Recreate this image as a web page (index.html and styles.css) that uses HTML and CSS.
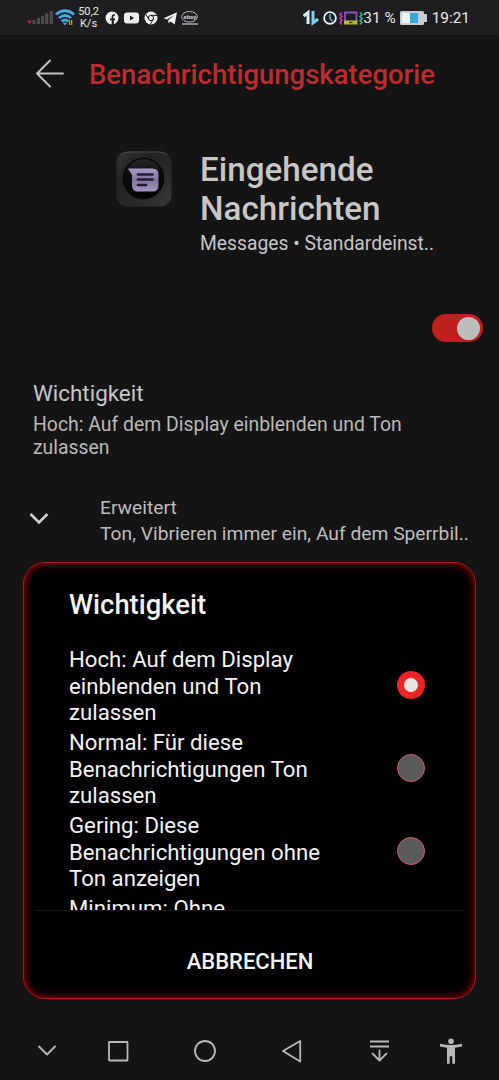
FILE: index.html
```
<!DOCTYPE html>
<html lang="de">
<head>
    <meta charset="UTF-8">
    <meta name="viewport" content="width=device-width, initial-scale=1.0">
    <title>Benachrichtigungskategorie</title>
    <link rel="stylesheet" href="styles.css">
</head>
<body>
    <div class="screen">
        <div class="status-bar">
            <div class="status-left">
                <svg width="27" height="15" viewBox="0 0 27 15">
                    <path d="M0 10.500h5L2.500 14z" fill="#c21f28"/>
                    <path d="M5.500 10h3v4h-3zM10 8h3v6h-3zM14 6h3v8h-3zM18 3.500h3.200V14H18zM22.500 1h3.500v13h-3.500z" fill="#4b4b4c"/>
                </svg>
                <svg class="wifi" width="20" height="18" viewBox="0 0 20 18">
                    <g fill="none" stroke="#45a9e2" stroke-width="2.800">
                        <path d="M1 5.500q9-7.500 18 0"/>
                        <path d="M4 9q6-5 12 0"/>
                        <path d="M6.800 12.300q3.200-2.600 6.400 0"/>
                    </g>
                    <path d="M7.800 13.800h4.400L10 16.500z" fill="#45a9e2"/>
                    <path d="M14.500 11v5M16.700 11v5" stroke="#c9a326" stroke-width="1.300"/>
                </svg>
                <div class="speed"><span>50,2</span><span>K/s</span></div>
                <svg class="apps" width="94" height="16" viewBox="0 0 94 16">
                    <circle cx="7" cy="8" r="6.500" fill="#eee"/>
                    <path d="M8 15V8.700M5 9.300h5M10 5H9q-1.500 0-1.500 1.700V15" fill="none" stroke="#1e1e20" stroke-width="1.700"/>
                    <rect x="19" y="2.500" width="15" height="11" rx="3" fill="#eee"/>
                    <path d="M25 5.500v5l4-2.500z" fill="#1e1e20"/>
                    <circle cx="46" cy="8" r="6.500" fill="#eee"/>
                    <circle cx="46" cy="8" r="2.600" fill="none" stroke="#1e1e20" stroke-width="1"/>
                    <path d="M46 5.400h6M43.700 9.200L41 4.600M48.300 9.200L45.300 14.300" stroke="#1e1e20" stroke-width="1"/>
                    <path d="M58.500 8.200L72 2.300 69.700 14.500 65.500 11.500 63.600 13.300 63.200 10.300 69 5 61.900 9.600z" fill="#eee"/>
                    <ellipse cx="84.500" cy="6.800" rx="7.800" ry="5.300" fill="none" stroke="#bbb" stroke-width="1"/>
                    <text class="ebay" x="78.500" y="9">ebay</text>
                    <path d="M77 14h16" stroke="#aaa" stroke-width="1.500"/>
                </svg>
            </div>
            <div class="status-right">
                <svg width="60" height="18" viewBox="0 0 60 18">
                    <g fill="none" stroke-width="3">
                        <path d="M.500 7L5 3.500V15" stroke="#d9edf3"/>
                        <path d="M10 2v12l5-4" stroke="#7fd0ef"/>
                    </g>
                    <circle cx="27" cy="9" r="5.900" fill="none" stroke="#e6f4f5" stroke-width="1.800"/>
                    <path d="M27 5v4.500l2.500 2.500" fill="none" stroke="#59bdcf" stroke-width="1.500"/>
                    <path d="M39 3.500l-2 2 2 2-2 2 2 2-2 2 2 2" fill="none" stroke="#c23aa8" stroke-width="1.600"/>
                    <path d="M57 3.500l2 2-2 2 2 2-2 2 2 2-2 2" fill="none" stroke="#3cae76" stroke-width="1.600"/>
                    <path d="M42 13V3.500h11.500V13" fill="none" stroke="#8952c4" stroke-width="1.800"/>
                    <path d="M41 11.500h13.400v4H41z" fill="#b9bb38"/>
                    <path d="M46 13.500h3.500" stroke="#33351b" stroke-width="1.300"/>
                </svg>
                <span class="percent">31 %</span>
                <svg class="battery" width="27" height="14" viewBox="0 0 27 14">
                    <rect x="0" y="0" width="24" height="14" rx="1.500" fill="#c9cdd0"/>
                    <path d="M24 3h3v8h-3z" fill="#c9cdd0"/>
                    <rect x="2" y="2" width="8" height="10" fill="#e9f5fb"/>
                    <rect x="10" y="2" width="8" height="10" fill="#38a9dd"/>
                </svg>
                <span class="time">19:21</span>
            </div>
        </div>

        <div class="toolbar">
            <svg width="30" height="30" viewBox="0 0 30 30">
                <path d="M15 1.500L2 14.500l13 13M2 14.500h26" fill="none" stroke="#c4c4c4" stroke-width="1.900" stroke-linecap="round" stroke-linejoin="round"/>
            </svg>
            <h1>Benachrichtigungskategorie</h1>
        </div>

        <div class="channel">
            <svg class="app-icon" width="56" height="56" viewBox="0 0 56 56">
                <defs>
                    <linearGradient id="metal" x1="0" y1="0" x2="1" y2="1">
                        <stop offset="0" stop-color="#363636"/>
                        <stop offset=".3" stop-color="#222"/>
                        <stop offset=".6" stop-color="#272726"/>
                        <stop offset="1" stop-color="#383837"/>
                    </linearGradient>
                    <linearGradient id="bubble" x1="0" y1="0" x2="0" y2="1">
                        <stop offset="0" stop-color="#a79bc4"/>
                        <stop offset=".5" stop-color="#81739f"/>
                        <stop offset="1" stop-color="#a194c1"/>
                    </linearGradient>
                    <linearGradient id="lens" x1="0" y1="0" x2="0" y2="1">
                        <stop offset="0" stop-color="#29292b"/>
                        <stop offset=".4" stop-color="#0b0b0c"/>
                        <stop offset="1" stop-color="#040406"/>
                    </linearGradient>
                </defs>
                <rect x=".5" y=".5" width="55" height="55" rx="11" fill="url(#metal)"/>
                <path d="M5 4q4-3 8-3h30q5 0 8 3" fill="none" stroke="#4a4a4a" stroke-width="1"/>
                <circle cx="27.500" cy="27.500" r="20" fill="url(#lens)" stroke="#070707" stroke-width="1.500"/>
                <path d="M12 17.500H36.500q6 0 6 6v11q0 6-6 6H22q-6 0-6-6V24z" fill="url(#bubble)"/>
                <path d="M22 23.500h14.500M22 28.500h14.500M22 34h8" stroke="#211c31" stroke-width="2.700" stroke-linecap="round"/>
            </svg>
            <div class="channel-text">
                <h2>Eingehende Nachrichten</h2>
                <p>Messages • Standardeinst..</p>
            </div>
        </div>

        <div class="switch-row">
            <div class="switch"><div class="knob"></div></div>
        </div>

        <div class="setting">
            <div class="setting-title">Wichtigkeit</div>
            <div class="setting-text">Hoch: Auf dem Display einblenden und Ton zulassen</div>
        </div>

        <div class="advanced">
            <svg width="20" height="14" viewBox="0 0 20 14">
                <path d="M1.500 2l8.500 8.500L18.500 2" fill="none" stroke="#d0d0d0" stroke-width="2.600"/>
            </svg>
            <div class="advanced-text">
                <div>Erweitert</div>
                <div>Ton, Vibrieren immer ein, Auf dem Sperrbil..</div>
            </div>
        </div>

        <div class="nav-bar">
            <svg width="499" height="40" viewBox="0 0 499 40" fill="none" stroke="#b8b8b8" stroke-width="1.800" stroke-linecap="round" stroke-linejoin="round">
                <path d="M39 16.500l8 8 8-8"/>
                <rect x="109" y="12" width="18.500" height="18.500" rx=".5"/>
                <circle cx="205" cy="21" r="10"/>
                <path d="M300.200 11v20.500L283 21z"/>
                <path stroke-linecap="butt" d="M370 11.500h19M370 16.500h19"/>
                <path d="M379.500 20.500v10M372.500 23.500l7 7.200 7-7.200"/>
                <g fill="#b8b8b8" stroke="none">
                    <circle cx="451" cy="11.300" r="2.800"/>
                    <path d="M440 13.800q11 2.600 22 0v2.700l-7 1.200v16h-2.700v-7.500h-2.600v7.500H447v-16l-7-1.200z"/>
                </g>
            </svg>
        </div>

        <div class="dialog">
            <h3>Wichtigkeit</h3>
            <div class="options">
                <div class="option">
                    <span>Hoch: Auf dem Display einblenden und Ton zulassen</span>
                    <div class="radio checked"></div>
                </div>
                <div class="option">
                    <span>Normal: Für diese Benachrichtigungen Ton zulassen</span>
                    <div class="radio"></div>
                </div>
                <div class="option">
                    <span>Gering: Diese Benachrichtigungen ohne Ton anzeigen</span>
                    <div class="radio"></div>
                </div>
                <div class="option last">
                    <span>Minimum: Ohne</span>
                </div>
            </div>
            <div class="cancel">ABBRECHEN</div>
        </div>
    </div>
</body>
</html>
```
FILE: styles.css
```
* {
    box-sizing: border-box;
}
body {
    margin: 0;
    background-color: #141414;
    font-family: Roboto, "Noto Sans", sans-serif;
}
h1, h2, h3, p {
    margin: 0;
    font-weight: 500;
}
svg {
    display: block;
    flex-shrink: 0;
}
.screen {
    position: relative;
    display: flex;
    flex-direction: column;
    width: 499px;
    height: 1080px;
    overflow: hidden;
    color: #c6c6c6;
}
.status-bar {
    display: flex;
    justify-content: space-between;
    height: 35px;
    padding: 0 29px 0 27px;
    background-color: #1e1e20;
    color: #e8e8e8;
}
.status-left, .status-right {
    display: flex;
    align-items: center;
    height: 35px;
}
.wifi {
    margin-left: 1px;
}
.speed {
    display: flex;
    flex-direction: column;
    align-items: center;
    width: 21px;
    margin-left: 3px;
    font-size: 11px;
    line-height: 12px;
    white-space: nowrap;
}
.apps {
    margin-left: 6px;
}
.ebay {
    font-size: 6px;
    font-weight: 700;
    fill: #ccc;
}
.percent, .time {
    font-size: 15.4px;
    white-space: nowrap;
}
.battery {
    margin: 0 5px 0 4px;
}
.toolbar {
    display: flex;
    align-items: center;
    height: 78px;
    padding-left: 35px;
}
.toolbar h1 {
    margin-left: 24px;
    font-size: 27.5px;
    color: #bd2b2f;
}
.channel {
    display: flex;
    height: 200px;
    padding: 37px 0 0 116px;
}
.app-icon {
    margin-top: 1px;
}
.channel-text {
    width: 250px;
    margin-left: 28px;
}
.channel h2 {
    font-size: 33.2px;
    line-height: 39px;
}
.channel p {
    margin-top: 4px;
    font-size: 19.3px;
    font-weight: 400;
    white-space: nowrap;
}
.switch-row {
    display: flex;
    justify-content: flex-end;
    height: 67px;
    padding: 1px 16px 0 0;
}
.switch {
    display: flex;
    justify-content: flex-end;
    align-items: center;
    width: 51px;
    height: 28px;
    padding-right: 3px;
    border-radius: 14px;
    background-color: #c11f1f;
}
.knob {
    width: 23px;
    height: 23px;
    border-radius: 50%;
    background-color: #bcbcbc;
}
.setting {
    height: 115px;
    padding: 0 60px 0 33px;
}
.setting-title {
    font-size: 22.4px;
    line-height: 27px;
}
.setting-text {
    margin-top: 7px;
    font-size: 19.4px;
    line-height: 22.7px;
    color: #b8b8b8;
}
.advanced {
    display: flex;
    padding-left: 29px;
}
.advanced svg {
    margin-top: 17px;
}
.advanced-text {
    margin-left: 51px;
    font-size: 19.25px;
    line-height: 26.4px;
    color: #bdbdbd;
    white-space: nowrap;
}
.nav-bar {
    margin-top: auto;
    height: 50px;
}
.dialog {
    position: absolute;
    left: 23px;
    top: 562px;
    display: flex;
    flex-direction: column;
    width: 453px;
    height: 437px;
    padding: 0 11px 0 12px;
    border: 1px solid #b01822;
    border-radius: 22px;
    background-color: #000;
    box-shadow: inset 0 0 9px 0 #c00008;
    color: #f2f2f2;
}
.dialog h3 {
    height: 80px;
    padding: 26px 0 0 33px;
    font-size: 27.4px;
    line-height: 32px;
}
.options {
    height: 268px;
    padding-left: 33px;
    overflow: hidden;
    border-bottom: 1px solid #161616;
}
.option {
    display: flex;
    justify-content: space-between;
    align-items: center;
    height: 83px;
    padding-right: 39px;
    font-size: 22.2px;
    line-height: 26.4px;
}
.option span {
    width: 265px;
    padding-top: 3px;
}
.option.last {
    align-items: flex-start;
}
.radio {
    width: 28px;
    height: 28px;
    border: 1px solid #d25c62;
    border-radius: 50%;
    background-color: #5a5a5a;
}
.radio.checked {
    border: 7px solid #ed2427;
    background-color: #e9e5e2;
}
.cancel {
    padding-top: 38px;
    font-size: 22px;
    font-weight: 500;
    line-height: 26px;
    text-align: center;
}
```
